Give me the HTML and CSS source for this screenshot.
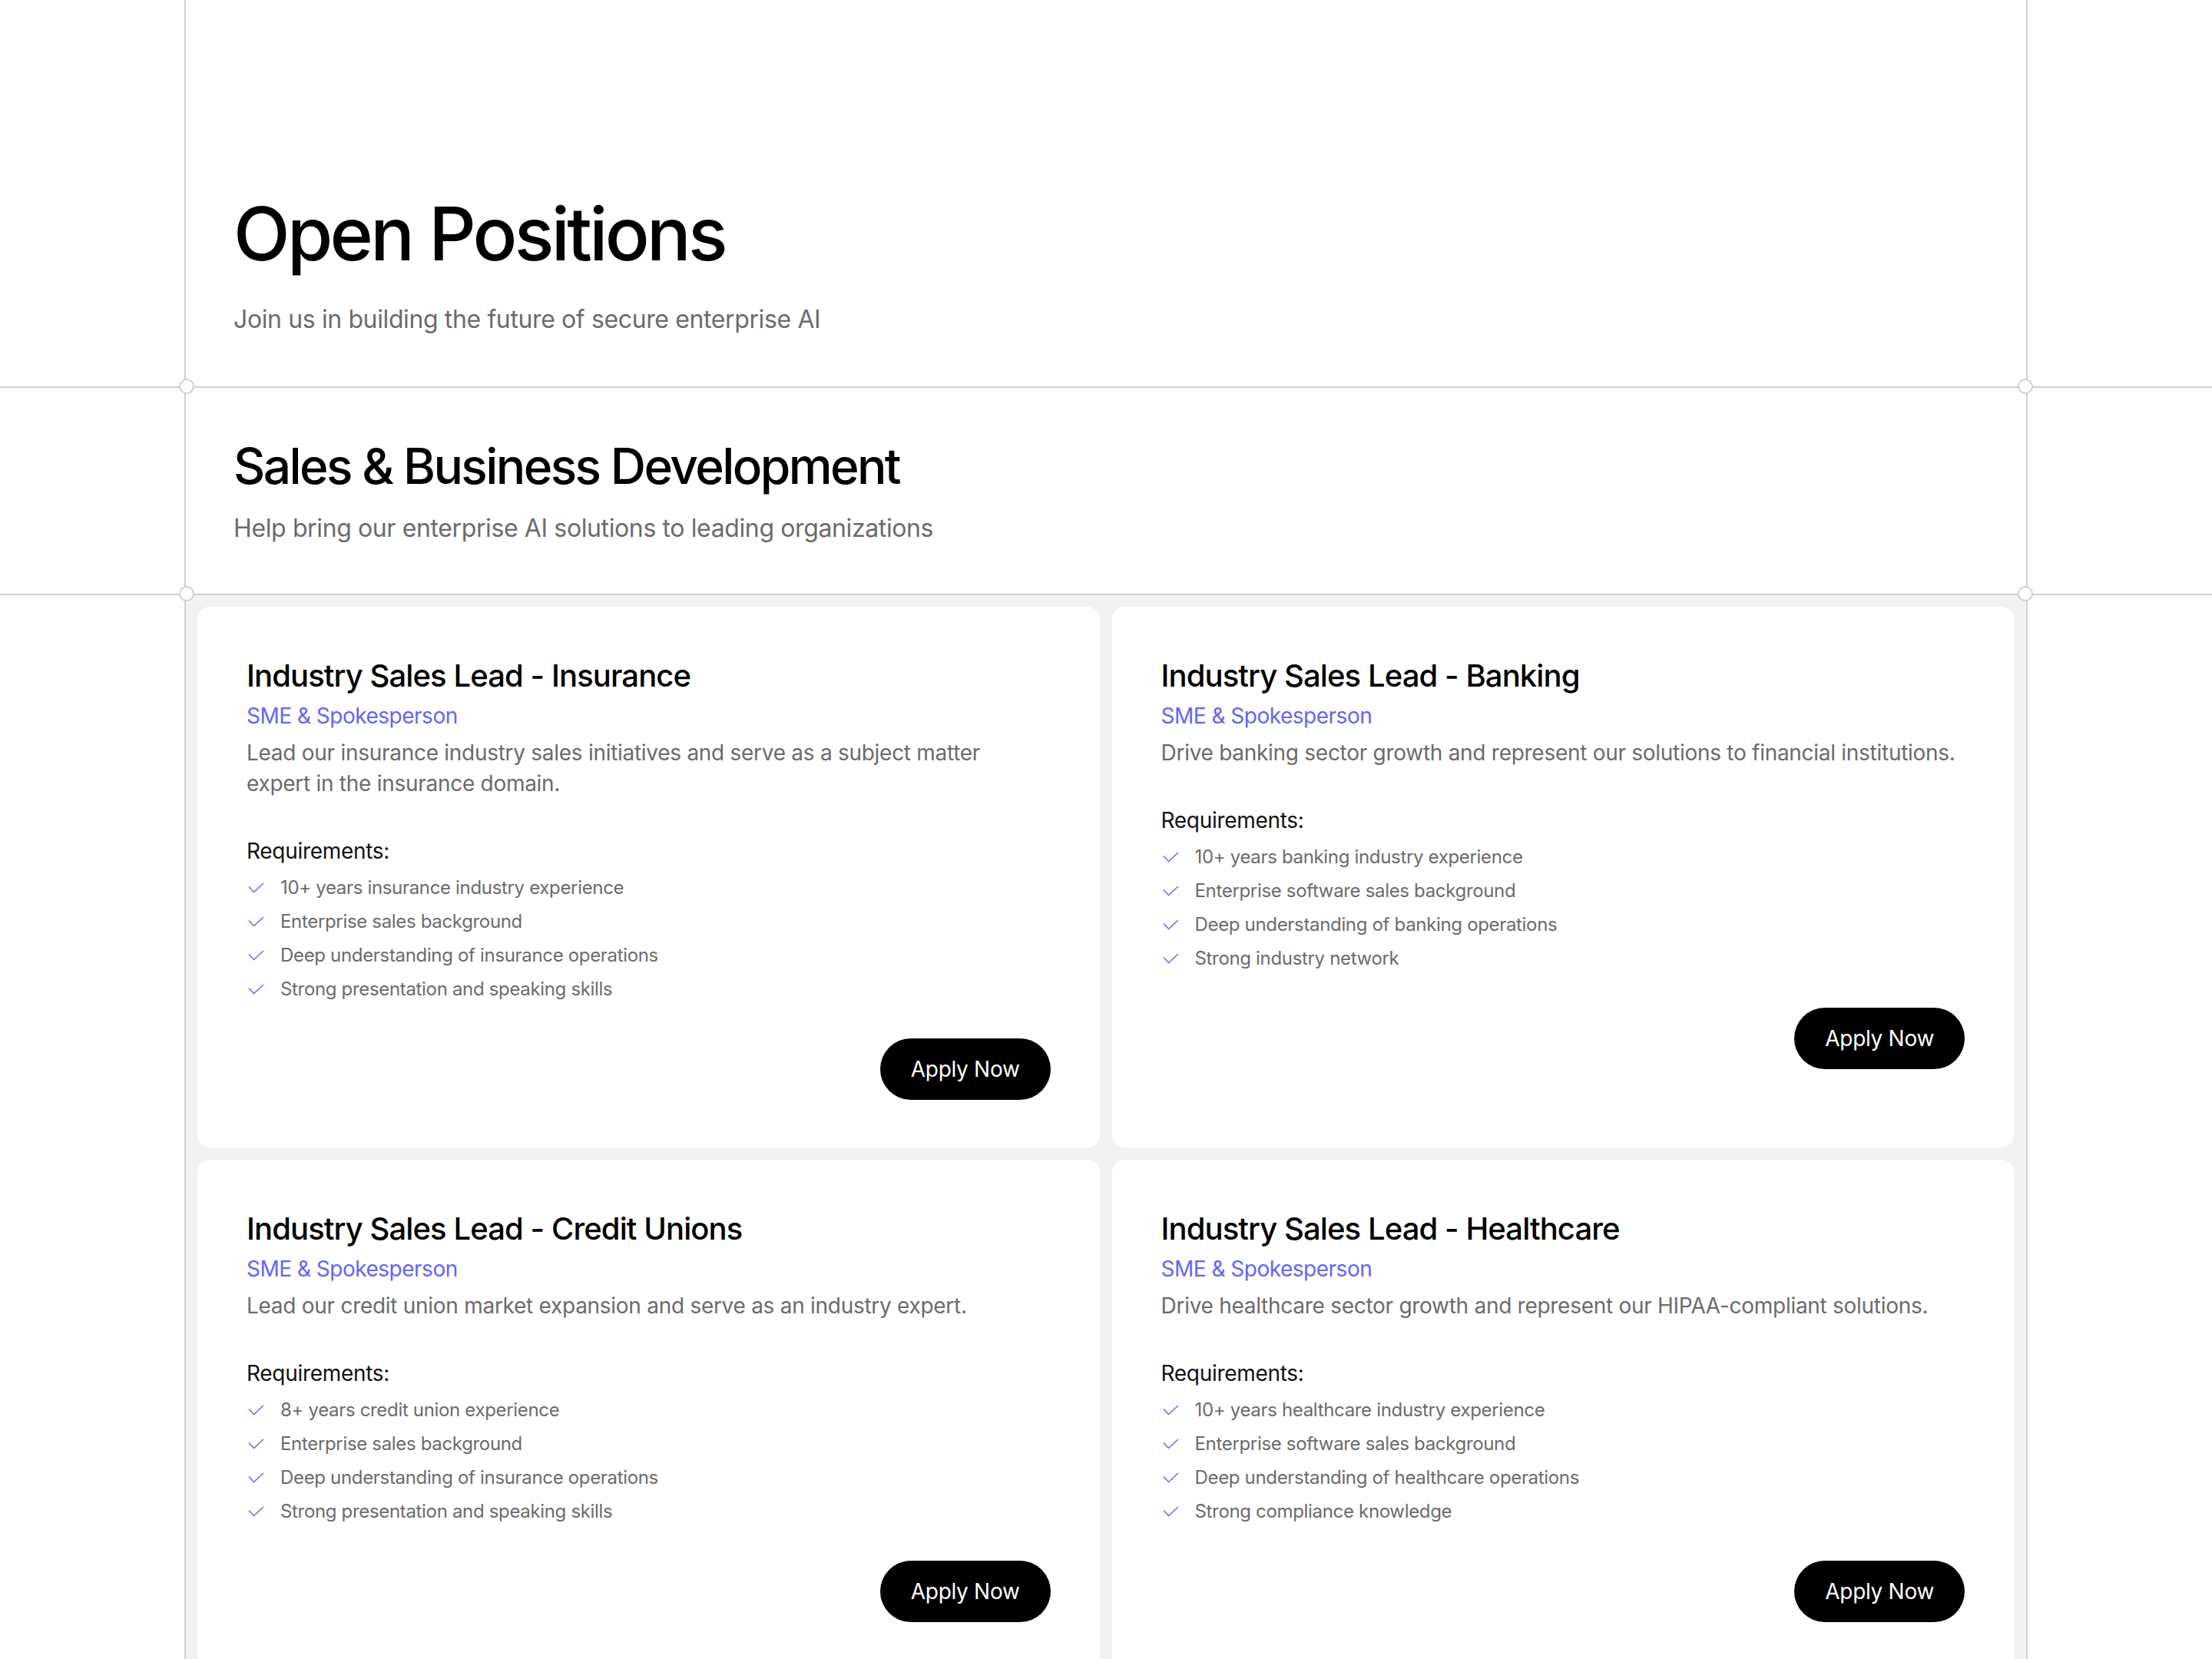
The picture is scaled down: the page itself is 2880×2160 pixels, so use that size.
FILE: index.html
```html
<!DOCTYPE html>
<html lang="en">
<head>
    <meta charset="utf-8">
    <meta name="viewport" content="width=device-width, initial-scale=1.0">
    <title>Careers - Open Positions</title>
    <link rel="stylesheet" href="styles.css">
</head>

<body>

    <header class="band intro">
        <div class="frame">
            <h1>Open Positions</h1>
            <p class="lead">Join us in building the future of secure enterprise AI</p>
        </div>
    </header>

    <section class="band dept">
        <div class="frame">
            <h2>Sales &amp; Business Development</h2>
            <p class="lead">Help bring our enterprise AI solutions to leading organizations</p>
        </div>
    </section>

    <main class="frame jobs">

        <article class="job">
            <h3>Industry Sales Lead - Insurance</h3>
            <p class="rolle">SME &amp; Spokesperson</p>
            <p class="beskrivelse">Lead our insurance industry sales initiatives and serve as a subject matter expert in the insurance domain.</p>
            <h4>Requirements:</h4>
            <ul class="krav">
                <li><svg viewBox="0 0 24 14"><polyline points="3,5.5 9.5,12.5 22,1"/></svg>10+ years insurance industry experience</li>
                <li><svg viewBox="0 0 24 14"><polyline points="3,5.5 9.5,12.5 22,1"/></svg>Enterprise sales background</li>
                <li><svg viewBox="0 0 24 14"><polyline points="3,5.5 9.5,12.5 22,1"/></svg>Deep understanding of insurance operations</li>
                <li><svg viewBox="0 0 24 14"><polyline points="3,5.5 9.5,12.5 22,1"/></svg>Strong presentation and speaking skills</li>
            </ul>
            <div class="handling"><button class="apply">Apply Now</button></div>
        </article>

        <article class="job">
            <h3>Industry Sales Lead - Banking</h3>
            <p class="rolle">SME &amp; Spokesperson</p>
            <p class="beskrivelse">Drive banking sector growth and represent our solutions to financial institutions.</p>
            <h4>Requirements:</h4>
            <ul class="krav">
                <li><svg viewBox="0 0 24 14"><polyline points="3,5.5 9.5,12.5 22,1"/></svg>10+ years banking industry experience</li>
                <li><svg viewBox="0 0 24 14"><polyline points="3,5.5 9.5,12.5 22,1"/></svg>Enterprise software sales background</li>
                <li><svg viewBox="0 0 24 14"><polyline points="3,5.5 9.5,12.5 22,1"/></svg>Deep understanding of banking operations</li>
                <li><svg viewBox="0 0 24 14"><polyline points="3,5.5 9.5,12.5 22,1"/></svg>Strong industry network</li>
            </ul>
            <div class="handling"><button class="apply">Apply Now</button></div>
        </article>

        <article class="job">
            <h3>Industry Sales Lead - Credit Unions</h3>
            <p class="rolle">SME &amp; Spokesperson</p>
            <p class="beskrivelse">Lead our credit union market expansion and serve as an industry expert.</p>
            <h4>Requirements:</h4>
            <ul class="krav">
                <li><svg viewBox="0 0 24 14"><polyline points="3,5.5 9.5,12.5 22,1"/></svg>8+ years credit union experience</li>
                <li><svg viewBox="0 0 24 14"><polyline points="3,5.5 9.5,12.5 22,1"/></svg>Enterprise sales background</li>
                <li><svg viewBox="0 0 24 14"><polyline points="3,5.5 9.5,12.5 22,1"/></svg>Deep understanding of insurance operations</li>
                <li><svg viewBox="0 0 24 14"><polyline points="3,5.5 9.5,12.5 22,1"/></svg>Strong presentation and speaking skills</li>
            </ul>
            <div class="handling"><button class="apply">Apply Now</button></div>
        </article>

        <article class="job">
            <h3>Industry Sales Lead - Healthcare</h3>
            <p class="rolle">SME &amp; Spokesperson</p>
            <p class="beskrivelse">Drive healthcare sector growth and represent our HIPAA-compliant solutions.</p>
            <h4>Requirements:</h4>
            <ul class="krav">
                <li><svg viewBox="0 0 24 14"><polyline points="3,5.5 9.5,12.5 22,1"/></svg>10+ years healthcare industry experience</li>
                <li><svg viewBox="0 0 24 14"><polyline points="3,5.5 9.5,12.5 22,1"/></svg>Enterprise software sales background</li>
                <li><svg viewBox="0 0 24 14"><polyline points="3,5.5 9.5,12.5 22,1"/></svg>Deep understanding of healthcare operations</li>
                <li><svg viewBox="0 0 24 14"><polyline points="3,5.5 9.5,12.5 22,1"/></svg>Strong compliance knowledge</li>
            </ul>
            <div class="handling"><button class="apply">Apply Now</button></div>
        </article>

    </main>

</body>
</html>
```

FILE: styles.css
```css
* {
    box-sizing: border-box;
    margin: 0;
    padding: 0;
}

body {
    font-family: Inter, "Noto Sans", sans-serif;
    background-color: #fff;
    color: #000;
}

/* full width rows with a line under them */
.band {
    border-bottom: 2px solid #d0d0d0;
}

/* the centered column with the two vertical lines */
.frame {
    position: relative;
    width: 2400px;
    margin: 0 auto;
    border-left: 2px solid #d0d0d0;
    border-right: 2px solid #d0d0d0;
}

/* small rings where the lines cross */
.band .frame::before,
.band .frame::after {
    content: "";
    position: absolute;
    bottom: -10px;
    width: 16px;
    height: 16px;
    border: 2px solid #d0d0d0;
    border-radius: 50%;
    background-color: #fff;
    z-index: 1;
}

.band .frame::before {
    left: -9px;
}

.band .frame::after {
    right: -9px;
}

.intro .frame {
    padding: 256px 62px 63px;
}

h1 {
    font-size: 96px;
    line-height: 96px;
    font-weight: 500;
    letter-spacing: -3.7px;
    margin-bottom: 40px;
}

.lead {
    font-size: 32px;
    line-height: 48px;
    letter-spacing: -0.38px;
    color: #6b6b6b;
}

.dept .frame {
    padding: 62px 62px 61px;
}

h2 {
    font-size: 64px;
    line-height: 80px;
    font-weight: 500;
    letter-spacing: -2.6px;
    margin-bottom: 17px;
}

.jobs {
    display: grid;
    grid-template-columns: 1fr 1fr;
    gap: 16px;
    padding: 15px 16px 16px 15px;
    background-color: #f2f2f2;
}

.job {
    background-color: #fff;
    border-radius: 16px;
    padding: 66px 64px 62px;
}

h3 {
    font-size: 40px;
    line-height: 48px;
    font-weight: 500;
    letter-spacing: -0.9px;
}

.rolle {
    margin-top: 8px;
    font-size: 28px;
    line-height: 40px;
    letter-spacing: -0.5px;
    color: #6366f1;
}

.beskrivelse {
    max-width: 1040px;
    margin-top: 8px;
    font-size: 28px;
    line-height: 40px;
    letter-spacing: -0.28px;
    color: #6b6b6b;
}

h4 {
    margin-top: 48px;
    font-size: 28px;
    line-height: 40px;
    font-weight: 400;
    letter-spacing: -0.3px;
    color: #111;
}

.krav {
    list-style: none;
    margin-top: 12px;
    display: flex;
    flex-direction: column;
    gap: 12px;
}

.krav li {
    display: flex;
    align-items: center;
    font-size: 24px;
    line-height: 32px;
    letter-spacing: -0.33px;
    color: #6b6b6b;
}

.krav svg {
    width: 24px;
    height: 14px;
    margin-right: 20px;
    fill: none;
    stroke: #6366f1;
    stroke-width: 1.4;
}

.handling {
    display: flex;
    justify-content: flex-end;
    margin-top: 48px;
}

.apply {
    background-color: #000;
    color: #fff;
    border: none;
    border-radius: 999px;
    padding: 20px 40px;
    font-family: Inter, "Noto Sans", sans-serif;
    font-size: 28px;
    line-height: 40px;
    letter-spacing: -0.3px;
    cursor: pointer;
}
```
